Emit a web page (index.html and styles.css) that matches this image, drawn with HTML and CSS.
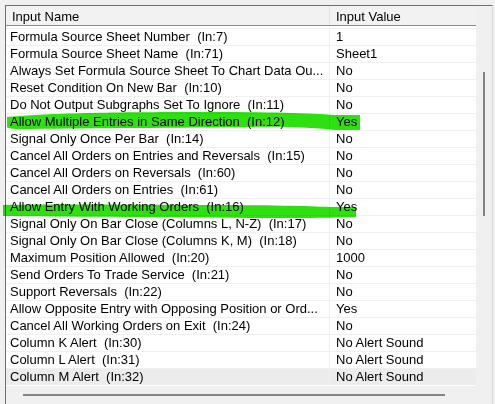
FILE: index.html
```
<!DOCTYPE html>
<html lang="en">
<head>
    <meta charset="UTF-8">
    <title>Study Inputs</title>
    <link rel="stylesheet" href="styles.css">
</head>
<body>

    <div class="listview">
        <div class="main">
            <div class="header">
                <div class="col name">Input Name</div>
                <div class="col value">Input Value</div>
            </div>
            <div class="rows">
                <div class="row"><div class="col name">Formula Source Sheet Number  (In:7)</div><div class="col value">1</div></div>
                <div class="row"><div class="col name">Formula Source Sheet Name  (In:71)</div><div class="col value">Sheet1</div></div>
                <div class="row"><div class="col name">Always Set Formula Source Sheet To Chart Data Ou...</div><div class="col value">No</div></div>
                <div class="row"><div class="col name">Reset Condition On New Bar  (In:10)</div><div class="col value">No</div></div>
                <div class="row"><div class="col name">Do Not Output Subgraphs Set To Ignore  (In:11)</div><div class="col value">No</div></div>
                <div class="row"><div class="col name">Allow Multiple Entries in Same Direction  (In:12)</div><div class="col value">Yes</div></div>
                <div class="row"><div class="col name">Signal Only Once Per Bar  (In:14)</div><div class="col value">No</div></div>
                <div class="row"><div class="col name">Cancel All Orders on Entries and Reversals  (In:15)</div><div class="col value">No</div></div>
                <div class="row"><div class="col name">Cancel All Orders on Reversals  (In:60)</div><div class="col value">No</div></div>
                <div class="row"><div class="col name">Cancel All Orders on Entries  (In:61)</div><div class="col value">No</div></div>
                <div class="row"><div class="col name">Allow Entry With Working Orders  (In:16)</div><div class="col value">Yes</div></div>
                <div class="row"><div class="col name">Signal Only On Bar Close (Columns L, N-Z)  (In:17)</div><div class="col value">No</div></div>
                <div class="row"><div class="col name">Signal Only On Bar Close (Columns K, M)  (In:18)</div><div class="col value">No</div></div>
                <div class="row"><div class="col name">Maximum Position Allowed  (In:20)</div><div class="col value">1000</div></div>
                <div class="row"><div class="col name">Send Orders To Trade Service  (In:21)</div><div class="col value">No</div></div>
                <div class="row"><div class="col name">Support Reversals  (In:22)</div><div class="col value">No</div></div>
                <div class="row"><div class="col name">Allow Opposite Entry with Opposing Position or Ord...</div><div class="col value">Yes</div></div>
                <div class="row"><div class="col name">Cancel All Working Orders on Exit  (In:24)</div><div class="col value">No</div></div>
                <div class="row"><div class="col name">Column K Alert  (In:30)</div><div class="col value">No Alert Sound</div></div>
                <div class="row"><div class="col name">Column L Alert  (In:31)</div><div class="col value">No Alert Sound</div></div>
                <div class="row current"><div class="col name">Column M Alert  (In:32)</div><div class="col value">No Alert Sound</div></div>
            </div>
        </div>
        <div class="vscroll"><div class="thumb"></div></div>
        <div class="hscroll"><div class="thumb"></div></div>
        <div class="corner"></div>

        <!-- highlighter marks drawn over two of the rows -->
        <svg class="marker" width="495" height="404" viewBox="0 0 495 404">
            <path d="M7 117 C40 114 90 112 200 112 C270 112 310 113 335 115 L360 115 L360 130 L335 130 C320 128 280 126 250 127 C180 128 90 128 30 129 C15 129 8 129 7 127 Z"/>
            <path d="M3 205 C60 204 150 205 200 205 C270 205 310 206 330 207 L356 207 L356 217 C330 218 300 218 250 218 C150 217 60 217 3 216 Z"/>
        </svg>
    </div>

</body>
</html>
```

FILE: styles.css
```
body {
    margin: 0;
    height: 404px;
    overflow: hidden;
    background-color: #f0f0f0;
    font-family: "Liberation Sans", Arial, sans-serif;
    font-size: 13px;
    color: #000;
}

/* list control frame */
.listview {
    display: grid;
    grid-template-columns: 470px 16px;
    grid-template-rows: 380px 18px;
    margin: 5px 0 0 5px;
    width: 486px;
    border-top: 1px solid #6e6e6e;
    border-left: 1px solid #6e6e6e;
    border-right: 1px solid #d8d8d8;
}

.main {
    background-color: #fff;
    overflow: hidden;
}

.header {
    display: flex;
    height: 19px;
    border-bottom: 1px solid #8c8c8c;
    background-color: #f2f2f2;
}

.header .col {
    padding: 3px 0 0 6px;
    line-height: 16px;
}

.header .name {
    border-right: 1px solid #e2e2e2;
}

.col {
    white-space: pre;
    overflow: hidden;
    line-height: 16px;
    box-sizing: border-box;
}

.col.name {
    width: 324px;
    flex: none;
}

.col.value {
    flex: 1;
}

.rows {
    padding: 2px 0 1px 0;
}

.row {
    display: flex;
    height: 16px;
    border-top: 1px solid #f0f0f0;
}

.row .name {
    padding-left: 4px;
    border-right: 1px solid #f0f0f0;
}

.row .value {
    padding-left: 6px;
}

.row.current {
    background-color: #ececec;
}

/* thin scrollbars */
.vscroll {
    grid-row: 1;
    grid-column: 2;
    background-color: #f0f0f0;
}

.vscroll .thumb {
    width: 2px;
    height: 144px;
    margin: 66px 0 0 7px;
    background-color: #858585;
}

.hscroll {
    grid-row: 2;
    grid-column: 1;
    background-color: #f0f0f0;
}

.hscroll .thumb {
    width: 422px;
    height: 2px;
    margin: 8px 0 0 17px;
    background-color: #858585;
}

.corner {
    grid-row: 2;
    grid-column: 2;
    background-color: #f0f0f0;
}

.marker {
    position: absolute;
    left: 0;
    top: 0;
    pointer-events: none;
    mix-blend-mode: multiply;
}

.marker path {
    fill: #2fe010;
}
```
